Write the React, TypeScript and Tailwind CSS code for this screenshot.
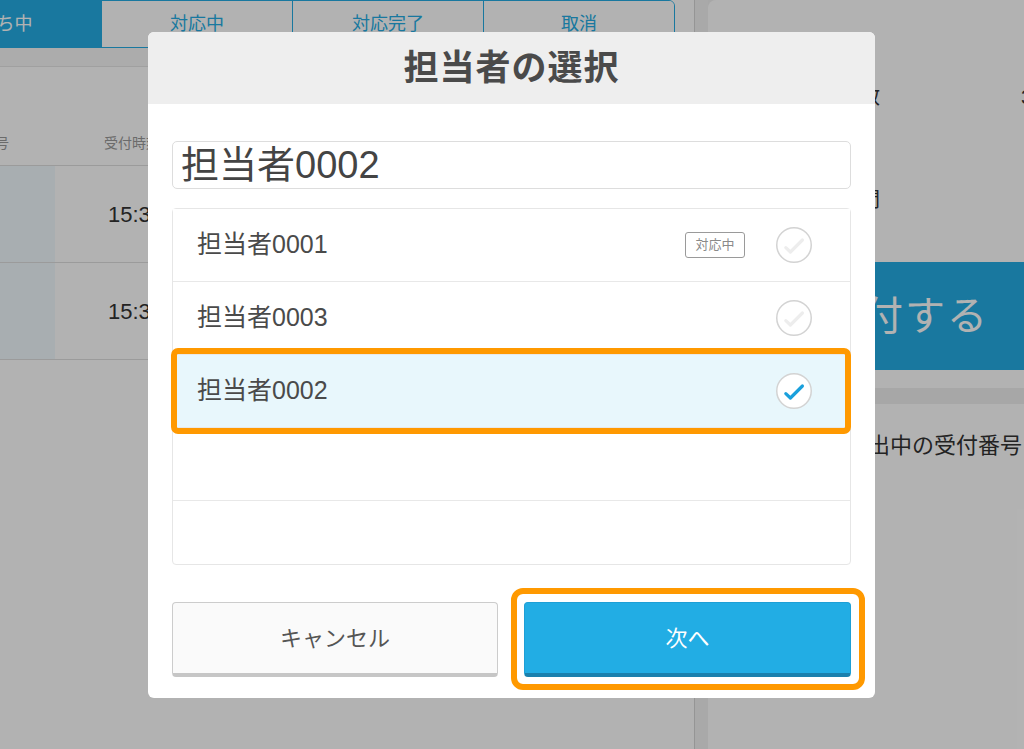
import React from 'react';

type Staff = {
  id: string;
  name: string;
  busy?: boolean;
};

const staffList: Staff[] = [
  { id: '0001', name: '担当者0001', busy: true },
  { id: '0003', name: '担当者0003' },
  { id: '0002', name: '担当者0002' },
];

const selectedId = '0002';

const tabs = ['待ち中', '対応中', '対応完了', '取消'];

const CheckCircle: React.FC<{ checked: boolean }> = ({ checked }) => (
  <svg width="36" height="36" viewBox="0 0 36 36" className="shrink-0">
    <circle cx="18" cy="18" r="17.25" fill="#ffffff" stroke="#d3d3d3" strokeWidth="1.5" />
    <polyline
      points="9.8,20.6 14.4,25 26.4,13"
      fill="none"
      stroke={checked ? '#1aa0dc' : '#ededed'}
      strokeWidth="3.2"
      strokeLinecap="round"
      strokeLinejoin="round"
    />
  </svg>
);

// 背景の受付画面 (ダイアログの下に見えている部分)
const BackgroundScreen: React.FC = () => (
  <div className="flex h-full">
    {/* Left: queue list */}
    <div className="w-[695px] shrink-0 bg-white border-r border-[#d6d6d6] flex flex-col overflow-hidden">
      <div className="h-[48px] flex -ml-[91px]">
        <div className="flex border border-[#25ade4] rounded-tr-[6px] overflow-hidden">
          {tabs.map((tab, i) => (
            <div
              key={tab}
              className={`w-[191px] flex items-center justify-center text-[18px] ${
                i === 0 ? 'bg-[#25ade4] text-white' : 'bg-white text-[#25ade4] border-l border-[#25ade4]'
              }`}
            >
              {tab}
            </div>
          ))}
        </div>
      </div>
      <div className="h-[19px] bg-[#f7f7f7] border-b border-[#e6e6e6]" />
      <div className="h-[99px] flex items-end pb-[11px] border-b border-[#dedede] text-[14px] text-[#9a9a9a]">
        <div className="w-[155px] -ml-[100px] text-right pr-[46px]">受付番号</div>
        <div className="pl-[49px]">受付時刻</div>
      </div>
      {['15:32', '15:38'].map((time) => (
        <div key={time} className="h-[97px] flex border-b border-[#dedede]">
          <div className="w-[155px] -ml-[100px] bg-[#f1fafe]" />
          <div className="pl-[53px] flex items-center text-[22px] text-[#333333]">{time}</div>
        </div>
      ))}
    </div>

    <div className="w-[13px] shrink-0 bg-[#f2f2f2]" />

    {/* Right: summary and action */}
    <div className="w-[400px] shrink-0 flex flex-col gap-[16px]">
      <div className="h-[388px] bg-white rounded-tl-[8px] px-[12px] flex flex-col">
        <div className="mt-[84px] h-[26px] flex items-center text-[20px] text-[#333333]">
          <div className="w-[160px] text-right">待ち人数</div>
          <div className="ml-[141px]">3組</div>
        </div>
        <div className="mt-[77px] h-[26px] flex items-center text-[20px] text-[#333333]">
          <div className="w-[160px] text-right">待ち時間</div>
        </div>
        <div className="mt-[49px] h-[108px] bg-[#25ade4] flex items-center justify-center text-white text-[40px] tracking-[2px] pr-[6px]">
          受付する
        </div>
      </div>
      <div className="flex-1 bg-white pt-[25px] pl-[138px] text-[22px] text-[#333333]">呼出中の受付番号</div>
    </div>
  </div>
);

const App: React.FC = () => {
  return (
    <div
      className="relative w-[1024px] h-[749px] overflow-hidden bg-[#f0f0f0]"
      style={{ fontFamily: '"Liberation Sans", "Noto Sans CJK JP", sans-serif' }}
    >
      <BackgroundScreen />

      {/* Overlay + dialog */}
      <div className="absolute inset-0 bg-black/30 flex justify-start items-start pt-[32px] pl-[148px]">
        <div className="w-[727px] h-[666px] bg-white rounded-[6px] flex flex-col">
          <div className="h-[72px] bg-[#eeeeee] rounded-t-[6px] flex items-center justify-center">
            <h1 className="text-[35px] font-bold text-[#4a4a4a] tracking-[1px]">担当者の選択</h1>
          </div>

          <div className="px-[24px] flex flex-col">
            <div className="mt-[37px] h-[48px] border border-[#dddddd] rounded-[5px] flex items-center pl-[8px] text-[38px] text-[#444444]">
              担当者0002
            </div>

            {/* Staff list */}
            <div className="mt-[19px] h-[357px] border border-[#e6e6e6] rounded-[4px] flex flex-col">
              {staffList.map((staff) => {
                const selected = staff.id === selectedId;
                return (
                  <div
                    key={staff.id}
                    className={`relative h-[73px] shrink-0 flex items-center pl-[24px] pr-[38px] border-b border-[#e8e8e8] ${
                      selected ? 'bg-[#e8f7fc]' : 'bg-white'
                    }`}
                  >
                    <span className="text-[25px] text-[#4a4a4a] flex-1">{staff.name}</span>
                    {staff.busy && (
                      <span className="mr-[31px] w-[60px] h-[26px] border border-[#9a9a9a] rounded-[3px] flex items-center justify-center text-[13px] text-[#8a8a8a]">
                        対応中
                      </span>
                    )}
                    <CheckCircle checked={selected} />
                    {selected && (
                      <div className="absolute -top-[7px] -bottom-[7px] -left-[2px] -right-[1px] border-[6px] border-[#ff9900] rounded-[7px] pointer-events-none" />
                    )}
                  </div>
                );
              })}
              <div className="h-[73px] shrink-0 border-b border-[#e8e8e8]" />
              <div className="flex-1" />
            </div>

            {/* Buttons */}
            <div className="mt-[37px] flex gap-[26px]">
              <button className="w-[326px] h-[75px] bg-[#fafafa] border border-[#cccccc] border-b-[4px] border-b-[#c6c6c6] rounded-[4px] text-[22px] text-[#555555]">
                キャンセル
              </button>
              <div className="relative">
                <button className="w-[327px] h-[75px] bg-[#22ade4] border border-[#1e9fd6] border-b-[4px] border-b-[#1a80ad] rounded-[4px] text-[22px] text-white">
                  次へ
                </button>
                <div className="absolute -top-[14px] -bottom-[13px] -left-[13px] -right-[14px] border-[6px] border-[#ff9900] rounded-[12px] pointer-events-none" />
              </div>
            </div>
          </div>
        </div>
      </div>
    </div>
  );
};

export default App;
